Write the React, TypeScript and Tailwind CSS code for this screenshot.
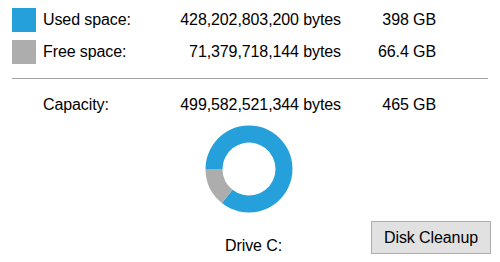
import React from "react";

const BLUE = "#26A0DA";
const GRAY = "#ADADAD";

function arcPath(cx: number, cy: number, rOut: number, rIn: number, a0: number, a1: number) {
  const rad = (d: number) => (d * Math.PI) / 180;
  const p = (r: number, a: number) => [cx + r * Math.cos(rad(a)), cy + r * Math.sin(rad(a))];
  const large = a1 - a0 > 180 ? 1 : 0;
  const [x0, y0] = p(rOut, a0);
  const [x1, y1] = p(rOut, a1);
  const [x2, y2] = p(rIn, a1);
  const [x3, y3] = p(rIn, a0);
  return `M ${x0} ${y0} A ${rOut} ${rOut} 0 ${large} 1 ${x1} ${y1} L ${x2} ${y2} A ${rIn} ${rIn} 0 ${large} 0 ${x3} ${y3} Z`;
}

function Donut() {
  const free = 71379718144 / 499582521344;
  const freeDeg = free * 360;
  const c = 44;
  return (
    <svg width="88" height="88" viewBox="0 0 88 88">
      <path d={arcPath(c, c, 43.5, 26.5, 180, 180 - freeDeg + 360)} fill={BLUE} />
      <path d={arcPath(c, c, 43.5, 26.5, 180 - freeDeg, 180)} fill={GRAY} />
    </svg>
  );
}

function Row({ color, label, bytes, size }: { color?: string; label: string; bytes: string; size: string }) {
  return (
    <div className="flex h-[24px] items-center">
      <div className="ml-[12px] h-[24px] w-[24px]" style={{ backgroundColor: color ?? "transparent" }} />
      <div className="ml-[7px] w-[137px] whitespace-nowrap">{label}</div>
      <div className="w-[161px] whitespace-nowrap text-right">{bytes}</div>
      <div className="w-[95px] whitespace-nowrap text-right">{size}</div>
    </div>
  );
}

export default function App() {
  return (
    <div
      className="flex h-[262px] w-[500px] flex-col bg-white pt-[8px] text-[16px] leading-none tracking-[-0.1px] text-black"
      style={{ fontFamily: '"Liberation Sans", Arial, sans-serif' }}
    >
      <Row color={BLUE} label="Used space:" bytes="428,202,803,200 bytes" size="398 GB" />
      <div className="mt-[8px]">
        <Row color={GRAY} label="Free space:" bytes="71,379,718,144 bytes" size="66.4 GB" />
      </div>
      <div className="ml-[12px] mt-[14px] h-px w-[476px] bg-[#a0a0a0]" />
      <div className="mt-[14px]">
        <Row label="Capacity:" bytes="499,582,521,344 bytes" size="465 GB" />
      </div>
      <div className="ml-[205px] mt-[8px] h-[88px] w-[88px]">
        <Donut />
      </div>
      <div className="mt-[8px] flex h-[33px]">
        <div className="ml-[225px] w-[146px] self-end whitespace-nowrap">Drive C:</div>
        <button className="h-[33px] w-[120px] border border-[#adadad] bg-[#e1e1e1] text-center">
          Disk Cleanup
        </button>
      </div>
    </div>
  );
}
